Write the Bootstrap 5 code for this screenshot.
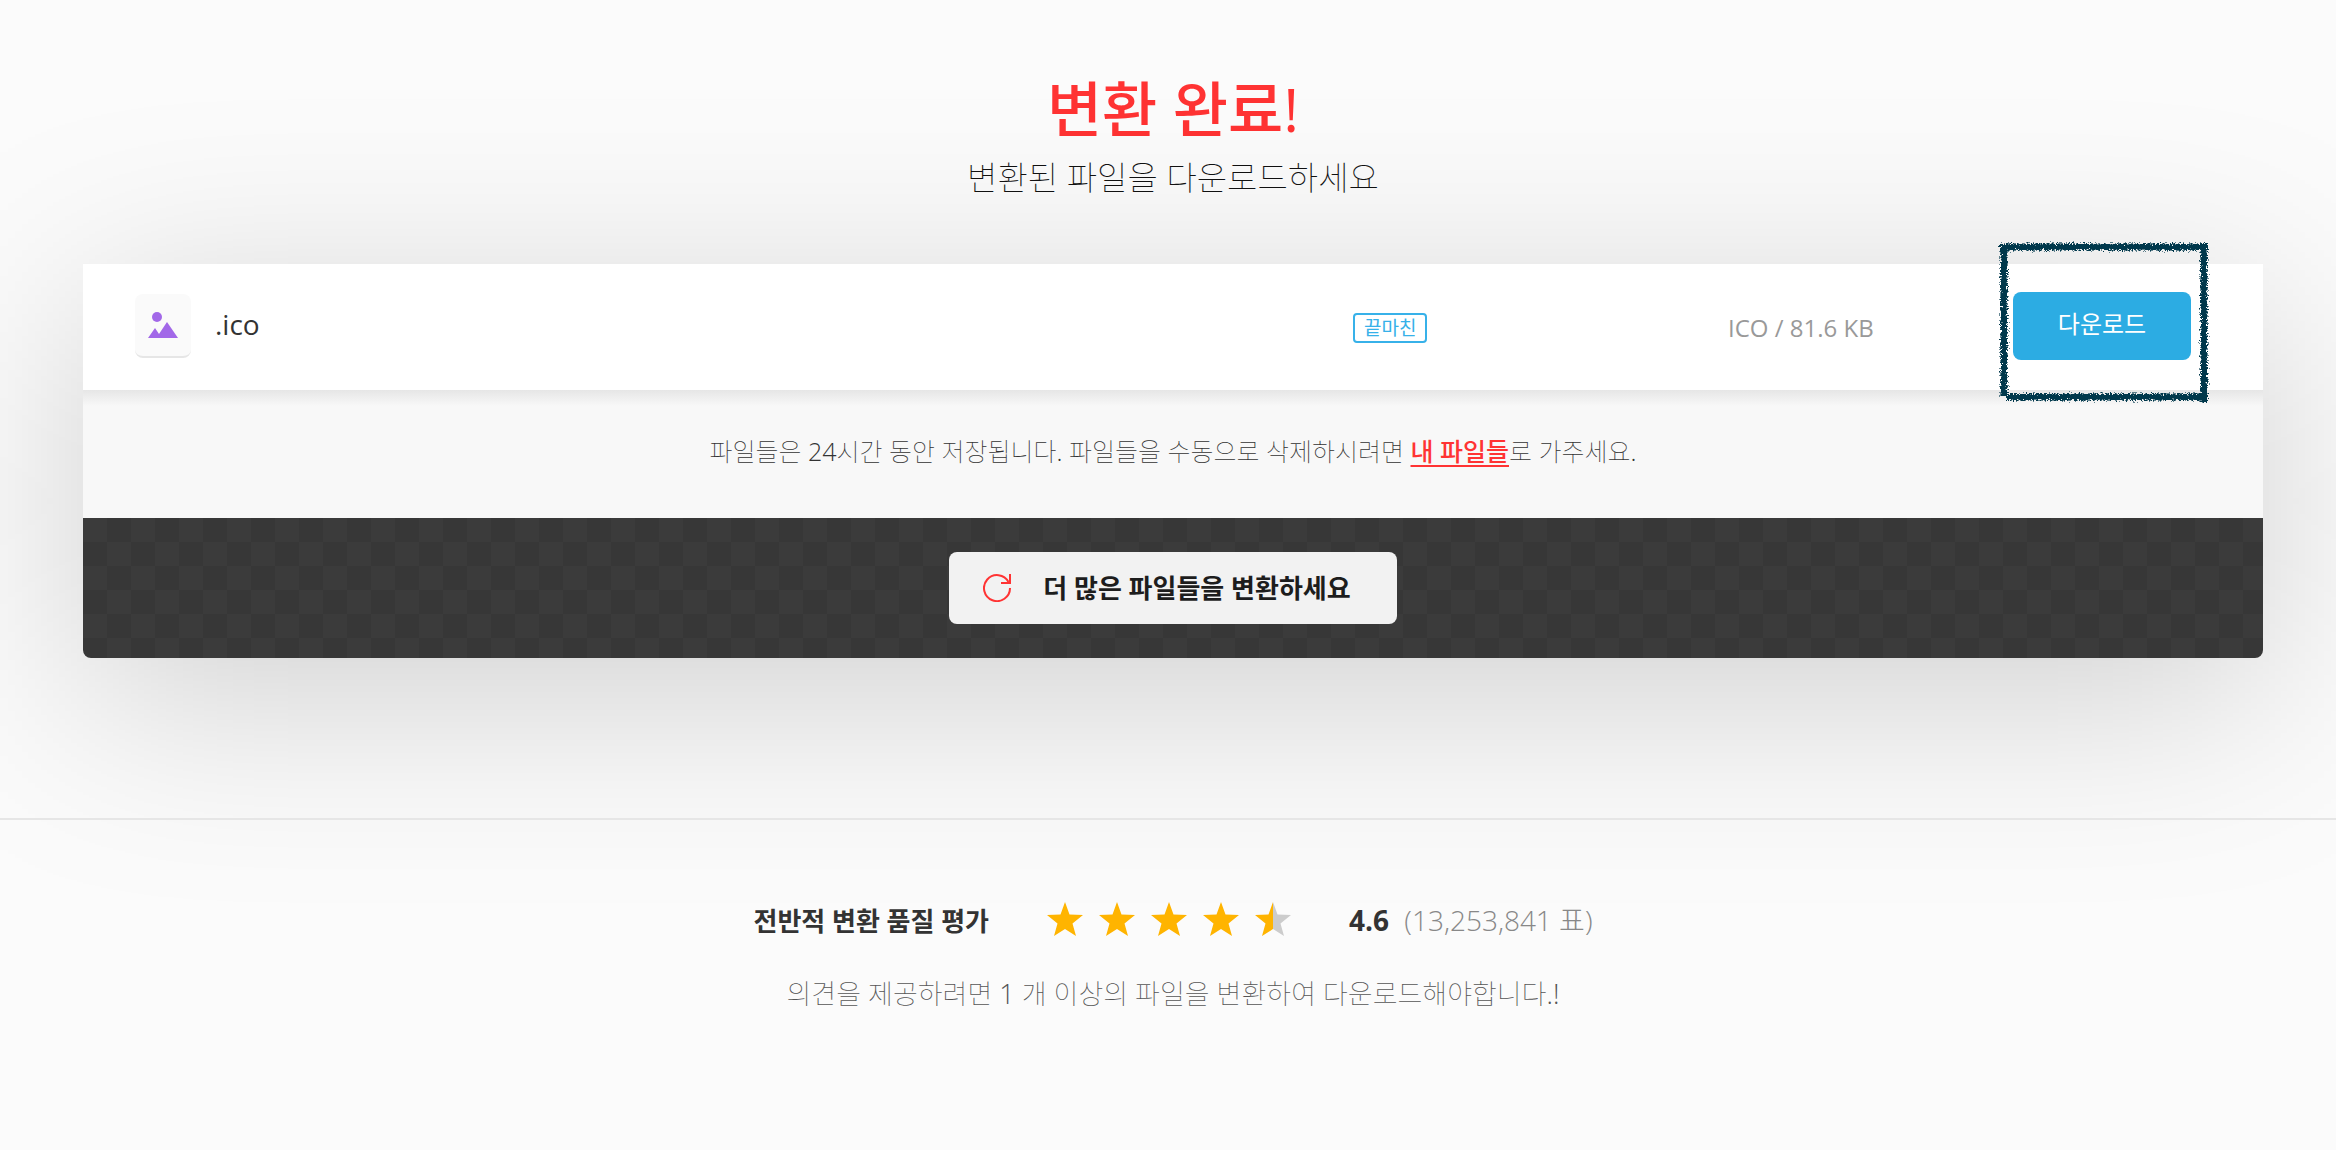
<!DOCTYPE html>
<html lang="ko">
<head>
<meta charset="utf-8">
<meta name="viewport" content="width=device-width, initial-scale=1">
<title>변환 완료!</title>
<link href="https://cdn.jsdelivr.net/npm/bootstrap@5.3.0/dist/css/bootstrap.min.css" rel="stylesheet">
<style>
  body { font-family: "Open Sans", "Noto Sans CJK KR", sans-serif; background: #fbfbfb; color: #333; overflow-x: hidden; }
  .result { padding: 68px 73px 160px 83px; }
  .result-title { font-size: 60px; line-height: 82px; font-weight: 500; color: #f33; }
  .result-sub { font-size: 33px; line-height: 48px; font-weight: 100; color: #111; padding-top: 4px; margin-bottom: 62px; }
  .panel { position: relative; z-index: 0; border-radius: 0 0 8px 8px; }
  .panel::before { content: ""; position: absolute; inset: 40px 0 -40px; z-index: -1; background: rgba(0,0,0,.17); filter: blur(100px); }
  .file-row { height: 126px; padding: 0 72px 2px 52px; background: #fff; }
  .file-icon { width: 56px; height: 64px; border-radius: 8px; background: #fafafa; border-bottom: 2px solid #e6e6e6; }
  .file-name { font-size: 28px; margin-left: 24px; padding-bottom: 4px; }
  .col-status { width: 375px; padding-top: 4px; }
  .status { height: 30px; padding: 0 9px; border: 2px solid #37b1e9; border-radius: 4px; color: #37b1e9; font-size: 19px; line-height: 26px; }
  .col-size { width: 285px; padding-top: 4px; font-size: 24px; color: #999; }
  .btn-download { width: 178px; height: 68px; border-radius: 8px; background: #2cace3; color: #fff; font-size: 24px; font-weight: 400; }
  .btn-download span { display: block; padding-bottom: 4px; }
  .btn-download:hover { background: #1d9bd1; color: #fff; }
  .chalk { position: absolute; left: -21px; top: -57px; width: 224px; height: 176px; z-index: 2; pointer-events: none; }
  .note { height: 128px; padding-bottom: 4px; font-size: 25px; font-weight: 100; color: #333; background: linear-gradient(#e6e6e6, #f8f8f8 16px); }
  .note a { color: #f33; font-weight: 500; text-underline-offset: 4px; text-decoration-thickness: 2px; }
  .more { height: 140px; border-radius: 0 0 8px 8px; background: conic-gradient(#373737 25%, #3b3b3b 0 50%, #373737 0 75%, #3b3b3b 0) 0 0 / 48px 48px; }
  .btn-more { height: 72px; padding: 0 46px 0 34px; border-radius: 8px; background: #f2f2f2; color: #1d1d1d; font-size: 26px; font-weight: 600; gap: 32px; }
  .btn-more:hover { background: #fff; }
  .rating { position: relative; border-top: 2px solid #e6e6e6; padding: 78px 73px 80px 83px; }
  .rating-line { gap: 58px; line-height: 44px; }
  .rating-label { font-size: 26px; font-weight: 700; }
  .stars { gap: 16px; padding-bottom: 4px; }
  .score { font-size: 28px; padding-bottom: 2px; }
  .votes { font-weight: 300; color: #888; margin-left: 8px; }
  .rating-hint { font-size: 27px; line-height: 40px; font-weight: 100; color: #555; margin-top: 30px; }
</style>
<script src="https://cdn.jsdelivr.net/npm/bootstrap@5.3.0/dist/js/bootstrap.bundle.min.js"></script>
</head>
<body>
<main class="result">
  <h1 class="result-title text-center m-0">변환 완료!</h1>
  <p class="result-sub text-center">변환된 파일을 다운로드하세요</p>
  <section class="panel">
    <div class="file-row d-flex align-items-center">
      <div class="file-icon d-flex align-items-center justify-content-center flex-shrink-0">
        <svg width="30" height="26" viewBox="0 0 30 26" fill="#a268e8" aria-hidden="true"><circle cx="9" cy="5" r="5"/><path d="M0 26 7 16l4 6 8-12 11 16z"/></svg>
      </div>
      <div class="file-name flex-grow-1">.ico</div>
      <div class="col-status d-flex"><span class="status">끝마친</span></div>
      <div class="col-size">ICO / 81.6 KB</div>
      <div class="position-relative">
        <button type="button" class="btn btn-download border-0 p-0 d-block"><span>다운로드</span></button>
        <svg class="chalk" viewBox="0 0 224 176" aria-hidden="true">
          <defs>
            <filter id="rough" filterUnits="userSpaceOnUse" x="0" y="0" width="224" height="176">
              <feTurbulence type="fractalNoise" baseFrequency=".7" numOctaves="2" seed="4" result="n"/>
              <feDisplacementMap in="SourceGraphic" in2="n" scale="7" xChannelSelector="R" yChannelSelector="G"/>
            </filter>
          </defs>
          <g filter="url(#rough)" fill="none" stroke="#00384d">
            <path stroke-width="6" d="M8 12H216M212 8V168M216 162H15M12 161V9"/>
            <path stroke-width="8" stroke-opacity=".6" stroke-dasharray="3 2 1 1 4 2" d="M8 12H216M212 8V168M216 162H15M12 161V9"/>
          </g>
        </svg>
      </div>
    </div>
    <div class="note d-flex align-items-center justify-content-center">
      <p class="m-0">파일들은 24시간 동안 저장됩니다. 파일들을 수동으로 삭제하시려면 <a href="#files">내 파일들</a>로 가주세요.</p>
    </div>
    <div class="more d-flex align-items-center justify-content-center">
      <button type="button" class="btn btn-more border-0 d-flex align-items-center">
        <svg width="28" height="28" viewBox="0 0 28 28" fill="none" stroke="#f33" stroke-width="2" aria-hidden="true"><path d="M27 14A13 13 0 1 1 25.500 8M27 0v9h-9"/></svg>
        더 많은 파일들을 변환하세요
      </button>
    </div>
  </section>
</main>
<footer class="rating text-center">
  <div class="rating-line d-flex align-items-center justify-content-center">
    <span class="rating-label">전반적 변환 품질 평가</span>
    <span class="stars d-flex">
      <svg width="0" height="0" class="position-absolute" aria-hidden="true"><defs><path id="star" d="M18 0l4.500 12.500 13.500.5-10.500 8.500L29 34l-11-7-11 7 3.500-12.500L0 13l13.500-.5z"/><linearGradient id="half"><stop offset=".5" stop-color="#ffb400"/><stop offset=".5" stop-color="#ccc"/></linearGradient></defs></svg>
      <svg width="36" height="34" fill="#ffb400"><use href="#star"/></svg>
      <svg width="36" height="34" fill="#ffb400"><use href="#star"/></svg>
      <svg width="36" height="34" fill="#ffb400"><use href="#star"/></svg>
      <svg width="36" height="34" fill="#ffb400"><use href="#star"/></svg>
      <svg width="36" height="34" fill="url(#half)"><use href="#star"/></svg>
    </span>
    <span class="score"><b>4.6</b> <span class="votes">(13,253,841 표)</span></span>
  </div>
  <p class="rating-hint mb-0">의견을 제공하려면 1 개 이상의 파일을 변환하여 다운로드해야합니다.!</p>
</footer>
</body>
</html>
